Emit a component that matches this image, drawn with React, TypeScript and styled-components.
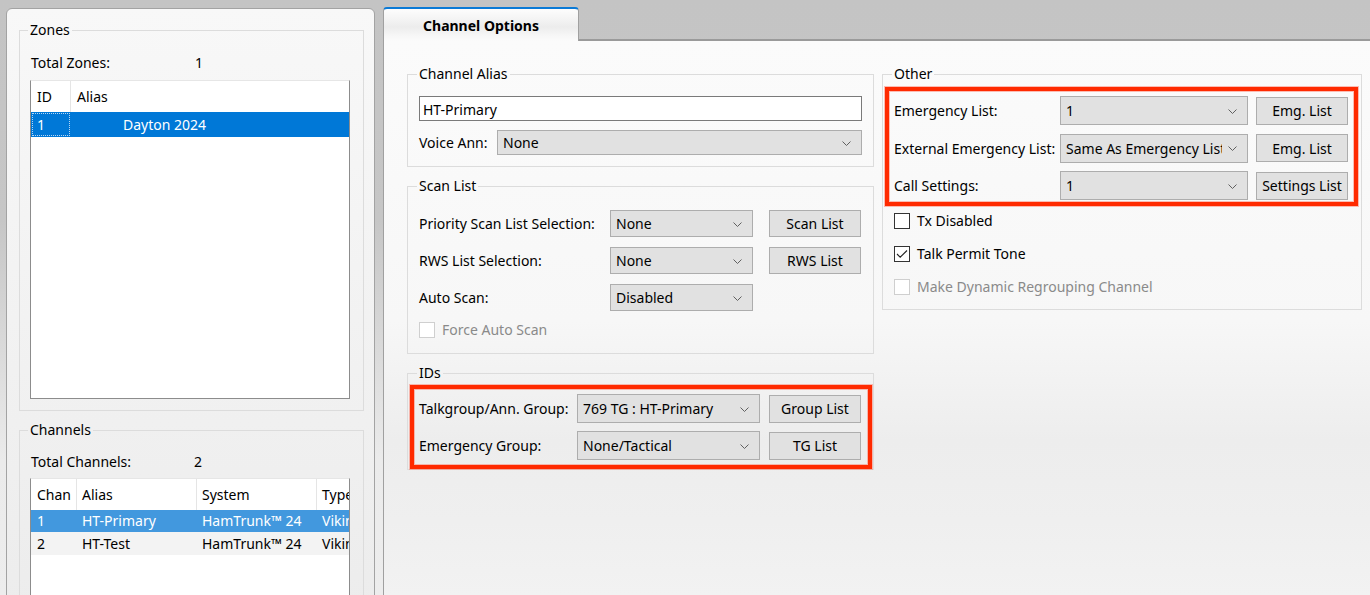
import React from 'react';
import styled, { createGlobalStyle } from 'styled-components';

const GlobalStyle = createGlobalStyle`
	html, body {
		margin: 0;
		padding: 0;
	}
	body {
		font-family: "Noto Sans", "Open Sans", sans-serif;
		font-size: 14px;
		line-height: 20px;
		color: #000;
	}
`;

const Window = styled.div`
	display: flex;
	width: 1370px;
	height: 595px;
	overflow: hidden;
	background: linear-gradient(#c4c4c4 0, #c6c6c6 220px, #ebebeb 460px, #ededed 100%);
`;

const SidePanel = styled.div`
	width: 369px;
	height: 620px;
	margin: 8px 0 0 6px;
	padding: 11px 10px 0 12px;
	box-sizing: border-box;
	border: 1px solid #a3a3a3;
	border-radius: 6px 6px 0 0;
	background: linear-gradient(#f8f8f8, #ececec);
	display: flex;
	flex-direction: column;
	gap: 9px;
`;

const GroupBox = styled.fieldset<{ $pad: string; $grow?: boolean }>`
	margin: 0;
	min-width: 0;
	border: 1px solid #dcdcdc;
	padding: ${p => p.$pad};
	display: flex;
	flex-direction: column;
	${p => p.$grow && 'flex: 1;'}
`;

const Legend = styled.legend<{ $shift?: number }>`
	padding: 0 2px;
	margin-left: ${p => (p.$shift ?? 0) - 2}px;
	line-height: 20px;
`;

const CountRow = styled.div<{ $label: number; $top: number; $after: number }>`
	display: grid;
	grid-template-columns: ${p => p.$label}px auto;
	height: 20px;
	padding: ${p => p.$top}px 0 0 1px;
	margin: 12px 0 ${p => p.$after}px;
`;

const List = styled.div<{ $grow?: boolean }>`
	background: #fff;
	border: 1px solid #8c8c8c;
	border-top-color: #e6e6e6;
	overflow: hidden;
	${p => (p.$grow ? 'flex: 1;' : 'height: 317px;')}
`;

const ListRow = styled.div<{ $cols: string; $h: number; $bg?: string; $light?: boolean }>`
	display: grid;
	grid-template-columns: ${p => p.$cols};
	width: 420px;
	height: ${p => p.$h}px;
	background: ${p => p.$bg ?? 'transparent'};
	color: ${p => (p.$light ? '#fff' : '#000')};
`;

const Cell = styled.div<{ $pad?: number; $header?: boolean; $focus?: boolean }>`
	display: flex;
	align-items: center;
	padding-left: ${p => p.$pad ?? 6}px;
	white-space: nowrap;
	overflow: hidden;
	border-right: ${p => (p.$header ? '1px solid #e5e5e5' : 'none')};
	${p => p.$focus && 'outline: 1px dotted #b9d6f2; outline-offset: -2px;'}
`;

const Main = styled.div`
	flex: 1;
	margin-left: 8px;
	display: flex;
	flex-direction: column;
`;

const TabStrip = styled.div`
	height: 39px;
	display: flex;
	align-items: flex-end;
	border-bottom: 2px solid #9a9a9a;
`;

const Tab = styled.div`
	width: 196px;
	height: 34px;
	margin-bottom: -2px;
	box-sizing: border-box;
	border: 1px solid #a0a0a0;
	border-top: 2px solid #0a7ad6;
	border-bottom: none;
	border-radius: 4px 4px 0 0;
	background: linear-gradient(#fdfdfd 0, #f4f4f4 10px, #ececec 18px, #f6f6f6 26px, #fbfbfb 100%);
	font-weight: 700;
	text-align: center;
	padding-top: 7px;
	position: relative;
	z-index: 1;
`;

const Content = styled.div`
	flex: 1;
	border-left: 1px solid #a0a0a0;
	background: linear-gradient(#fbfbfb 0, #f7f7f7 280px, #ededed 400px, #efefef 480px, #f2f2f2 100%);
	padding: 23px 0 0 23px;
	display: grid;
	grid-template-columns: 467px 480px;
	column-gap: 8px;
	align-items: start;
`;

const Column = styled.div`
	display: flex;
	flex-direction: column;
	gap: 9px;
`;

const TextBox = styled.div`
	height: 25px;
	box-sizing: border-box;
	border: 1px solid #7a7a7a;
	background: #fff;
	padding: 2px 3px 0;
	line-height: 21px;
`;

const FormGrid = styled.div<{ $cols: string; $row: number; $gap: number; $colGap?: number }>`
	display: grid;
	grid-template-columns: ${p => p.$cols};
	grid-auto-rows: ${p => p.$row}px;
	row-gap: ${p => p.$gap}px;
	column-gap: ${p => p.$colGap ?? 0}px;
	align-items: center;
`;

const Label = styled.div`
	white-space: nowrap;
	padding-top: 1px;
`;

const ComboBox = styled.div<{ $h: number }>`
	height: ${p => p.$h}px;
	box-sizing: border-box;
	border: 1px solid #adadad;
	background: #e1e1e1;
	display: flex;
	align-items: center;
	padding: 1px 10px 0 5px;
	gap: 6px;
	overflow: hidden;
`;

const ComboText = styled.span`
	flex: 1;
	white-space: nowrap;
	overflow: hidden;
`;

const Button = styled.div<{ $h: number; $offset?: number }>`
	height: ${p => p.$h}px;
	margin-left: ${p => p.$offset ?? 0}px;
	box-sizing: border-box;
	border: 1px solid #adadad;
	background: #e1e1e1;
	display: flex;
	align-items: center;
	justify-content: center;
	padding-top: 1px;
	white-space: nowrap;
`;

const Highlight = styled.div<{ $pad: string }>`
	border: 4px solid #ff2a00;
	box-shadow: 0 0 0 1px rgba(255, 110, 90, 0.45), inset 0 0 0 1px rgba(255, 110, 90, 0.45);
	padding: ${p => p.$pad};
`;

const CheckList = styled.div<{ $pad: string; $gap: number }>`
	display: flex;
	flex-direction: column;
	gap: ${p => p.$gap}px;
	padding: ${p => p.$pad};
`;

const CheckRow = styled.div<{ $disabled?: boolean }>`
	height: 22px;
	display: flex;
	align-items: center;
	gap: 7px;
	color: ${p => (p.$disabled ? '#8a8a8a' : '#000')};
`;

const Box = styled.span<{ $disabled?: boolean }>`
	width: 16px;
	height: 16px;
	box-sizing: border-box;
	border: 1px solid ${p => (p.$disabled ? '#cfcfcf' : '#333')};
	background: #fff;
	display: flex;
	align-items: center;
	justify-content: center;
`;

function Chevron() {
	return (
		<svg width="9" height="5" viewBox="0 0 9 5">
			<polyline points="0.5,0.5 4.5,4.5 8.5,0.5" fill="none" stroke="#606060" strokeWidth="1" />
		</svg>
	);
}

function Combo({ value, h = 27 }: { value: string; h?: number }) {
	return (
		<ComboBox $h={h}>
			<ComboText>{value}</ComboText>
			<Chevron />
		</ComboBox>
	);
}

function Check({ label, checked, disabled }: { label: string; checked?: boolean; disabled?: boolean }) {
	return (
		<CheckRow $disabled={disabled}>
			<Box $disabled={disabled}>
				{checked && (
					<svg width="12" height="10" viewBox="0 0 12 10">
						<polyline points="1,5 4.2,8.2 11,1.5" fill="none" stroke="#222" strokeWidth="1.1" />
					</svg>
				)}
			</Box>
			{label}
		</CheckRow>
	);
}

const zoneCols = '40px 1fr';
const chanCols = '46px 120px 120px 134px';

export default function App() {
	return (
		<>
			<GlobalStyle />
			<Window>
				<SidePanel>
					<GroupBox $pad="0 13px 11px 10px">
						<Legend>Zones</Legend>
						<CountRow $label={164} $top={1} $after={7}>
							<span>Total Zones:</span>
							<span>1</span>
						</CountRow>
						<List>
							<ListRow $cols={zoneCols} $h={31}>
								<Cell $header>ID</Cell>
								<Cell>Alias</Cell>
							</ListRow>
							<ListRow $cols={zoneCols} $h={25} $bg="#0078d7" $light>
								<Cell $focus>1</Cell>
								<Cell $pad={52}>Dayton 2024</Cell>
							</ListRow>
						</List>
					</GroupBox>
					<GroupBox $pad="0 13px 0 10px" $grow>
						<Legend>Channels</Legend>
						<CountRow $label={163} $top={0} $after={6}>
							<span>Total Channels:</span>
							<span>2</span>
						</CountRow>
						<List $grow>
							<ListRow $cols={chanCols} $h={31}>
								<Cell $header>Chan</Cell>
								<Cell $header $pad={5}>Alias</Cell>
								<Cell $header $pad={5}>System</Cell>
								<Cell $pad={5}>Type</Cell>
							</ListRow>
							<ListRow $cols={chanCols} $h={22} $bg="#4298de" $light>
								<Cell>1</Cell>
								<Cell $pad={5}>HT-Primary</Cell>
								<Cell $pad={5}>HamTrunk™ 24</Cell>
								<Cell $pad={5}>Viking</Cell>
							</ListRow>
							<ListRow $cols={chanCols} $h={23} $bg="#f3f3f3">
								<Cell>2</Cell>
								<Cell $pad={5}>HT-Test</Cell>
								<Cell $pad={5}>HamTrunk™ 24</Cell>
								<Cell $pad={5}>Viking</Cell>
							</ListRow>
						</List>
					</GroupBox>
				</SidePanel>

				<Main>
					<TabStrip>
						<Tab>Channel Options</Tab>
					</TabStrip>
					<Content>
						<Column>
							<GroupBox $pad="12px 11px 11px 11px">
								<Legend>Channel Alias</Legend>
								<TextBox>HT-Primary</TextBox>
								<FormGrid $cols="78px 1fr" $row={25} $gap={0} style={{ marginTop: 9 }}>
									<Label>Voice Ann:</Label>
									<Combo value="None" h={25} />
								</FormGrid>
							</GroupBox>

							<GroupBox $pad="14px 11px 12px 11px">
								<Legend>Scan List</Legend>
								<FormGrid $cols="191px 143px 108px" $row={27} $gap={10}>
									<Label>Priority Scan List Selection:</Label>
									<Combo value="None" />
									<Button $h={27} $offset={16}>Scan List</Button>
									<Label>RWS List Selection:</Label>
									<Combo value="None" />
									<Button $h={27} $offset={16}>RWS List</Button>
									<Label>Auto Scan:</Label>
									<Combo value="Disabled" />
								</FormGrid>
								<CheckList $pad="8px 0 0 0" $gap={0}>
									<Check label="Force Auto Scan" disabled />
								</CheckList>
							</GroupBox>

							<GroupBox $pad="2px 1px 0 2px">
								<Legend $shift={9}>IDs</Legend>
								<Highlight $pad="5px 7px 5px 5px">
									<FormGrid $cols="149px 183px 92px" $row={29} $gap={8} $colGap={9}>
										<Label>Talkgroup/Ann. Group:</Label>
										<Combo value="769 TG : HT-Primary" h={29} />
										<Button $h={28}>Group List</Button>
										<Label>Emergency Group:</Label>
										<Combo value="None/Tactical" h={29} />
										<Button $h={28}>TG List</Button>
									</FormGrid>
								</Highlight>
							</GroupBox>
						</Column>

						<Column>
							<GroupBox $pad="3px 3px 11px 2px">
								<Legend $shift={9}>Other</Legend>
								<Highlight $pad="5px 6px 2px 5px">
									<FormGrid $cols="158px 188px 92px" $row={29} $gap={8.5} $colGap={8}>
										<Label>Emergency List:</Label>
										<Combo value="1" h={29} />
										<Button $h={28}>Emg. List</Button>
										<Label>External Emergency List:</Label>
										<Combo value="Same As Emergency List" h={29} />
										<Button $h={28}>Emg. List</Button>
										<Label>Call Settings:</Label>
										<Combo value="1" h={29} />
										<Button $h={28}>Settings List</Button>
									</FormGrid>
								</Highlight>
								<CheckList $pad="4px 0 0 9px" $gap={11}>
									<Check label="Tx Disabled" />
									<Check label="Talk Permit Tone" checked />
									<Check label="Make Dynamic Regrouping Channel" disabled />
								</CheckList>
							</GroupBox>
						</Column>
					</Content>
				</Main>
			</Window>
		</>
	);
}
